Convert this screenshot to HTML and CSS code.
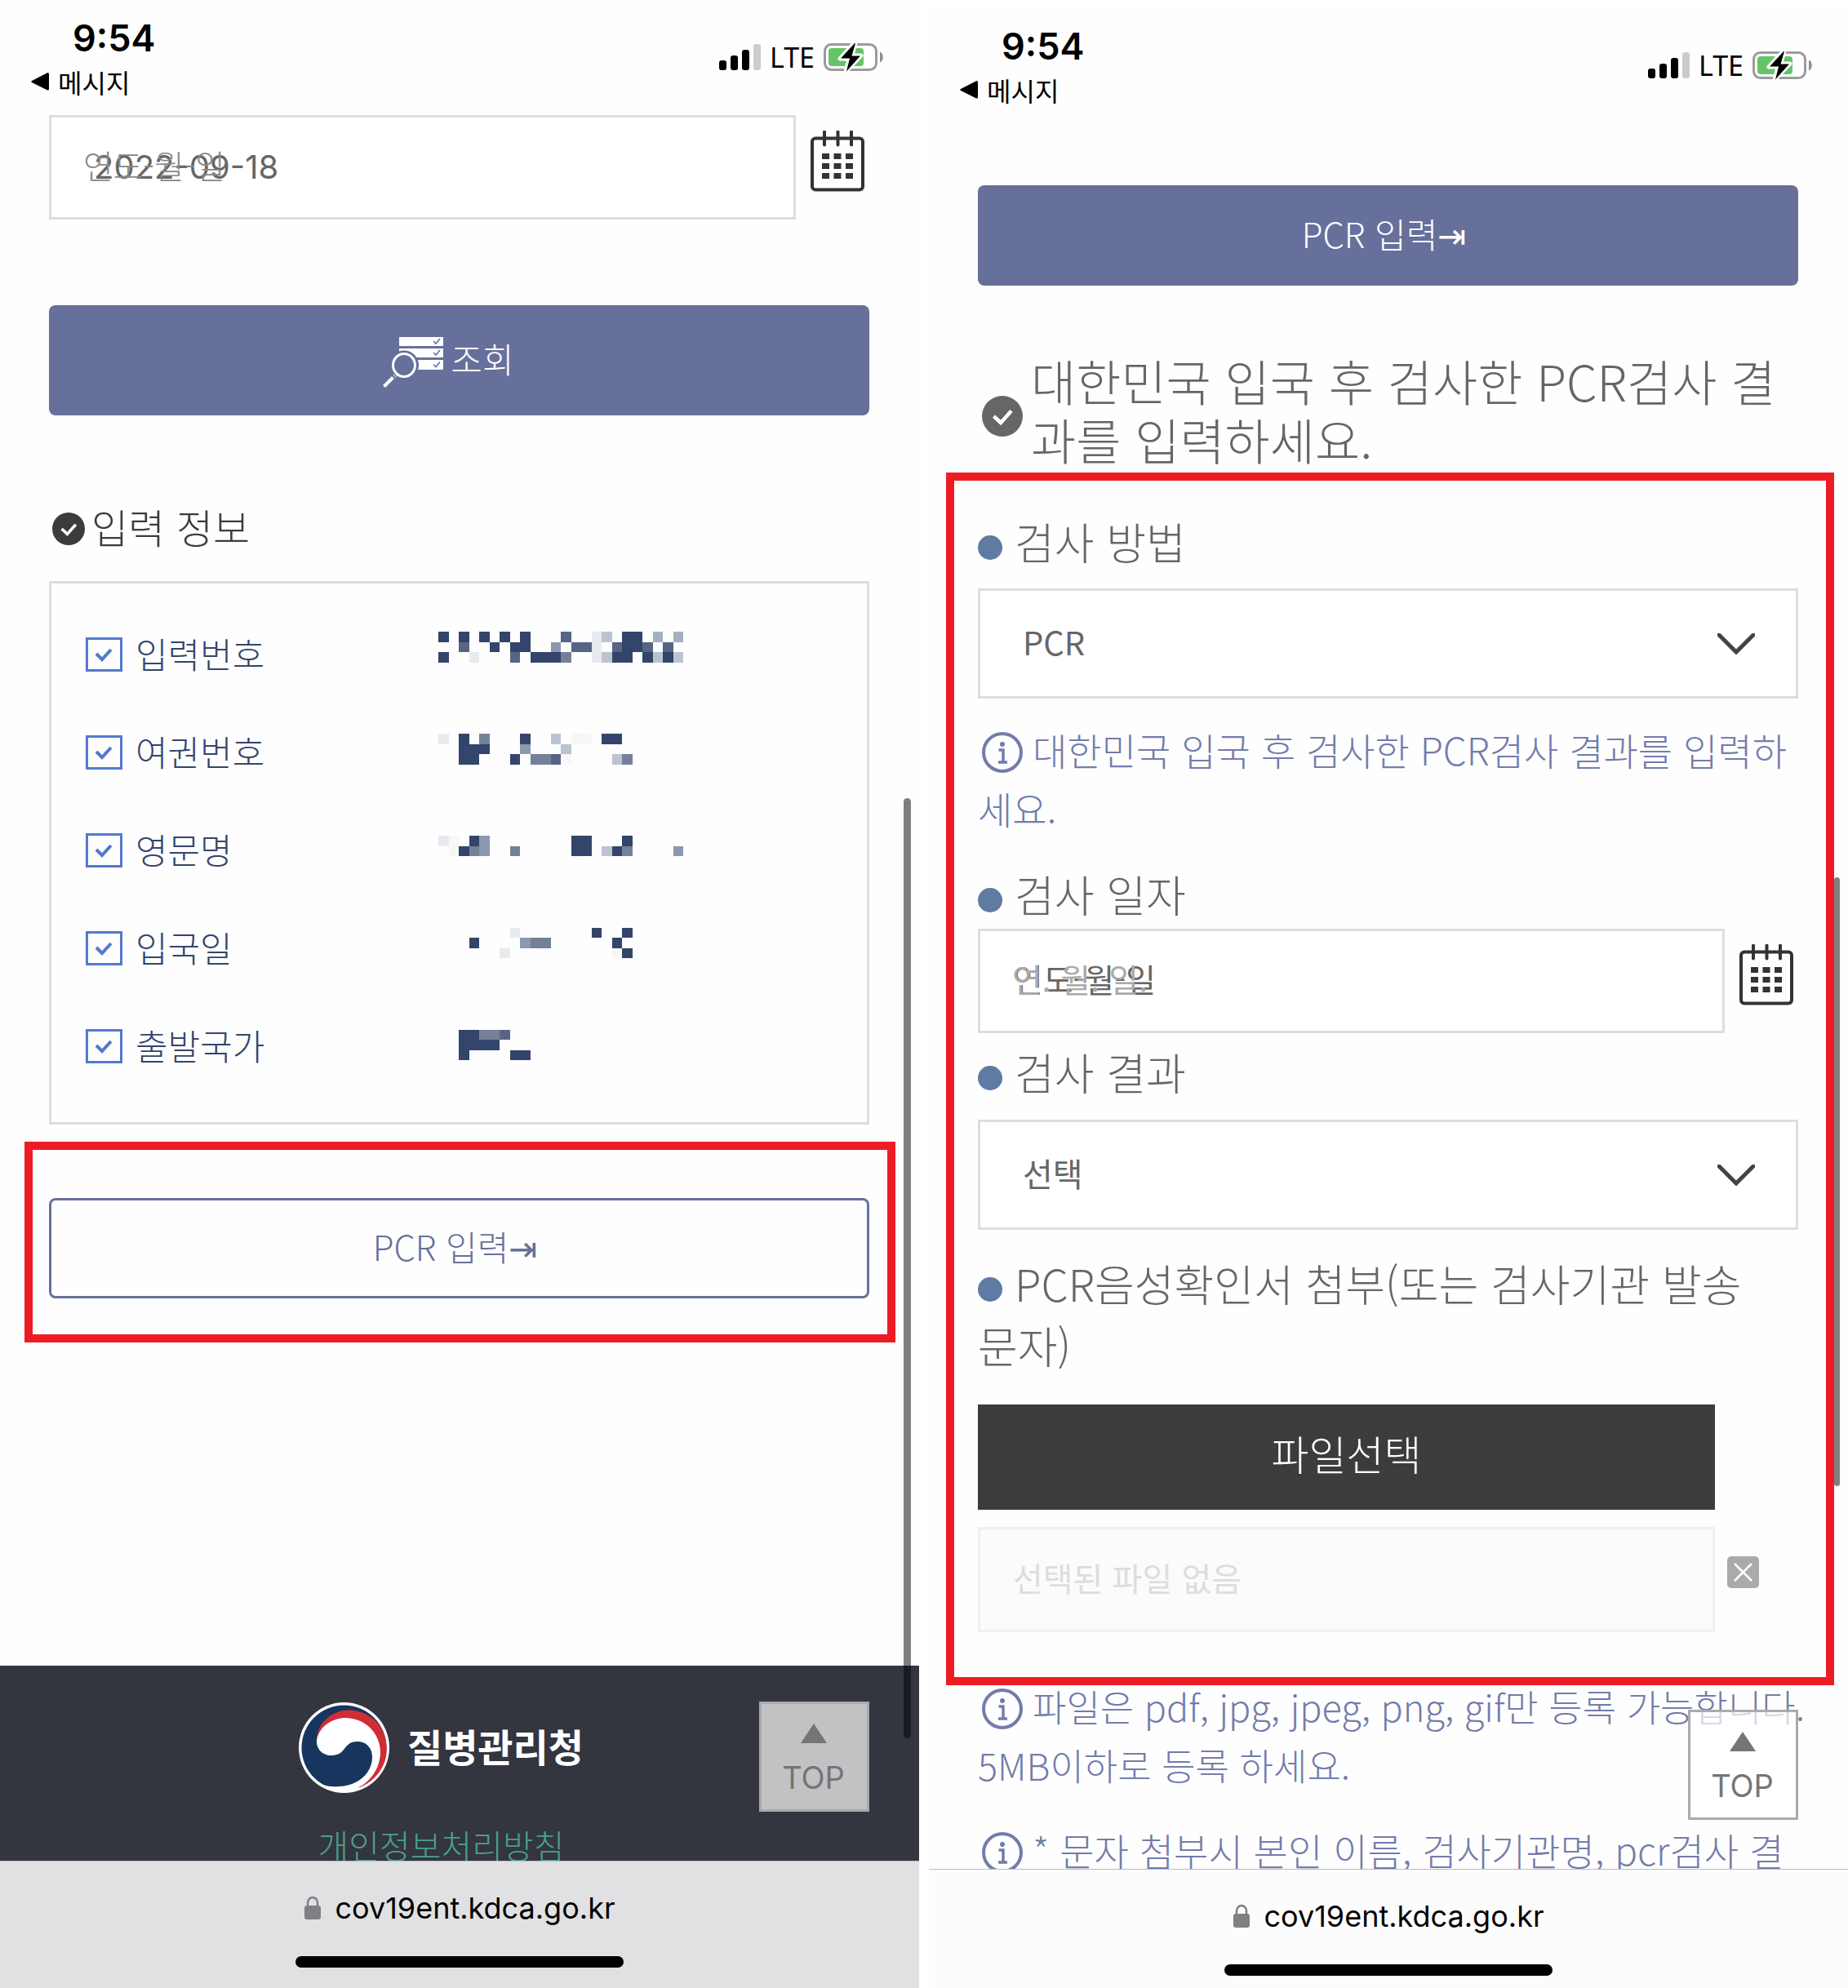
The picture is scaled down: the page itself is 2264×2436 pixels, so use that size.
FILE: index.html
```html
<!DOCTYPE html>
<html lang="ko">
<head>
<meta charset="utf-8">
<meta name="viewport" content="width=device-width, initial-scale=1">
<title>검역정보 사전입력 - PCR 입력</title>
<link rel="stylesheet" href="styles.css">
</head>
<body>
<svg class="sprite" aria-hidden="true">
  <symbol id="i-signal" viewBox="0 0 51 34">
    <g fill="#000"><rect x="0" y="21" width="9" height="12" rx="3"/><rect x="14" y="15" width="9" height="18" rx="3"/><rect x="28" y="8" width="9" height="25" rx="3"/></g>
    <rect x="42" y="1" width="9" height="32" rx="3" fill="#ccc"/>
  </symbol>
  <symbol id="i-battery" viewBox="0 0 74 38">
    <rect x="1.500" y="3.500" width="63" height="31" rx="8" fill="#fff" stroke="#9b9b9b" stroke-width="3"/>
    <rect x="6" y="8" width="43" height="22" rx="4" fill="#65c466"/>
    <path d="M69 12.500v13c5-2 5-11 0-13z" fill="#8e8e8e"/>
    <path d="M38 1 20 21h11l-4 16L46 17H35l4-16z" fill="#000" stroke="#fff" stroke-width="5" stroke-linejoin="round"/>
    <path d="M38 2 21 20.500h11l-4 16L45 17.500H34.500L39 2z" fill="#000"/>
  </symbol>
  <symbol id="i-calendar" viewBox="0 0 66 75">
    <rect x="2" y="9.500" width="62" height="63" rx="4" fill="none" stroke="#333" stroke-width="4"/>
    <path d="M17 1.500v16M33.500 1.500v16M50 1.500v16" stroke="#333" stroke-width="4" stroke-linecap="round"/>
    <path d="M14 28h9v7h-9zM28.500 28h9v7h-9zM43 28h9v7h-9zM14 40h9v7h-9zM28.500 40h9v7h-9zM43 40h9v7h-9zM14 52h9v7h-9zM28.500 52h9v7h-9zM43 52h9v7h-9z" fill="#333"/>
  </symbol>
  <symbol id="i-checked" viewBox="0 0 50 50">
    <circle cx="25" cy="25" r="25" fill="currentColor"/>
    <path d="M14.500 25l8.500 8L36 18.500" fill="none" stroke="#fff" stroke-width="4.500"/>
  </symbol>
  <symbol id="i-info" viewBox="0 0 50 50">
    <circle cx="25" cy="25" r="23" fill="none" stroke="#737cab" stroke-width="4"/>
    <circle cx="25" cy="15" r="3" fill="#737cab"/>
    <path d="M20.500 22H26v14M20 37h11" fill="none" stroke="#737cab" stroke-width="3.500"/>
  </symbol>
  <symbol id="i-lock" viewBox="0 0 20 30">
    <rect y="12" width="20" height="17" rx="3" fill="#7f7f84"/>
    <path d="M4 14V8.500a6 6.500 0 0 1 12 0V14" fill="none" stroke="#7f7f84" stroke-width="2.500"/>
  </symbol>
</svg>

<div class="pair">
  <section class="phone" aria-label="입력 정보 조회">
    <div class="screen">
      <header class="status">
        <div class="status-left">
          <time class="clock">9:54</time>
          <a class="back" href="#"><svg class="back-mark" viewBox="0 0 22 22"><path d="M20.500 0Q22 0 22 2v18q0 2-2 1.500L1 12q-1.500-1 0-2z"/></svg>메시지</a>
        </div>
        <div class="status-right">
          <svg class="signal"><use href="#i-signal"/></svg>
          <span>LTE</span>
          <svg class="battery"><use href="#i-battery"/></svg>
        </div>
      </header>

      <main class="content">
        <div class="date-row">
          <div class="date-field">
            <input class="box date-input date-input--filled" id="entry-date" type="text" value="2022-09-18" aria-label="입국일">
            <label class="ghost" for="entry-date">연도-월-일</label>
          </div>
          <button class="icon-btn" type="button" aria-label="달력"><svg class="calendar"><use href="#i-calendar"/></svg></button>
        </div>

        <button class="btn btn--search" type="button">
          <svg class="search-icon" viewBox="0 0 74 62">
            <path d="M20 0h54v11H20zM20 14h54v11H20zM20 28h54v12H20z" fill="#fff"/>
            <path d="M62 5l3 3 5-6M62 19l3 3 5-6M62 33.500l3 3 5-6" fill="none" stroke="#67709b" stroke-width="1.600"/>
            <circle cx="26" cy="34.500" r="18" fill="#67709b"/>
            <ellipse cx="26" cy="34.500" rx="13.500" ry="14" fill="none" stroke="#fff" stroke-width="3"/>
            <path d="M12.500 49.500 1.500 60.500" stroke="#fff" stroke-width="4"/>
            <path d="M13 46l3.500 4M15 45l3 3" stroke="#fff" stroke-width="1"/>
          </svg><span class="btn-text">조회</span>
        </button>

        <h2 class="info-title"><svg class="check-s"><use href="#i-checked"/></svg><span class="info-title-text">입력 정보</span></h2>

        <div class="info-box">
          <ul class="info-list">
            <li><label><input type="checkbox" class="tick" checked><span>입력번호</span></label></li>
            <li><label><input type="checkbox" class="tick" checked><span>여권번호</span></label></li>
            <li><label><input type="checkbox" class="tick" checked><span>영문명</span></label></li>
            <li><label><input type="checkbox" class="tick" checked><span>입국일</span></label></li>
            <li><label><input type="checkbox" class="tick" checked><span>출발국가</span></label></li>
          </ul>
          <svg class="masked" viewBox="0 0 24 42" preserveAspectRatio="none" shape-rendering="crispEdges" role="img" aria-label="가려진 개인정보">
            <path fill="#33456b" d="M0 0h1v1h-1zM2 0h1v1h-1zM4 0h1v1h-1zM6 0h1v1h-1zM8 0h1v1h-1zM18 0h2v2h-2zM5 1h1v1h-1zM7 1h2v1h-2zM0 2h1v1h-1zM9 2h3v1h-3zM17 2h2v1h-2zM20 2h1v1h-1zM22 2h1v1h-1z"/>
            <path fill="#566583" d="M12 0h1v1h-1zM2 1h1v1h-1zM13 1h2v1h-2zM17 1h1v1h-1zM20 1h1v1h-1zM22 1h1v1h-1zM7 2h1v1h-1zM11 12h1v1h-1zM6 39h1v1h-1z"/>
            <path fill="#e9eaf0" d="M15 0h1v3h-1zM3 2h1v1h-1zM0 10h1v1h-1zM0 20h1v1h-1zM7 29h1v1h-1zM6 31h1v1h-1z"/>
            <path fill="#bcc3d0" d="M16 0h1v1h-1zM16 2h1v1h-1zM21 2h1v1h-1zM23 2h1v1h-1zM11 10h1v1h-1zM12 11h1v1h-1zM17 12h1v1h-1zM16 21h1v1h-1z"/>
            <path fill="#a4afc0" d="M21 0h1v1h-1zM23 0h1v1h-1z"/>
            <path fill="#8c98ad" d="M11 1h1v1h-1zM8 11h1v1h-1zM4 20h1v2h-1zM23 21h1v1h-1zM8 30h1v1h-1z"/>
            <path fill="#748199" d="M12 2h1v1h-1zM4 10h1v1h-1zM9 12h2v1h-2zM18 12h1v1h-1zM3 21h1v1h-1zM7 21h1v1h-1zM18 21h1v1h-1zM9 30h2v1h-2zM4 39h2v1h-2z"/>
            <path fill="#33456b" d="M2 10h1v1h2v1h-1v1h-2zM8 10h1v1h-1zM16 10h2v1h-2zM7 12h1v1h-1zM3 20h1v1h-1zM2 21h1v1h-1zM13 20h2v2h-2zM18 20h1v1h-1zM17 21h1v1h-1zM15 29h1v1h-1zM18 29h1v1h-1zM3 30h1v1h-1zM17 30h1v1h-1zM18 31h1v1h-1zM2 39h2v1h2v1h-3v1h-1zM7 41h2v1h-2z"/>
            <path fill="#f7f7f8" d="M13 10h2v1h-2zM12 12h1v1h-1zM1 20h1v2h-1zM17 31h1v1h-1z"/>
          </svg>
        </div>

        <div class="mark mark--button">
          <button class="btn btn--pcr btn--outline" type="button"><span class="btn-text">PCR 입력⇥</span></button>
        </div>
      </main>

      <footer class="footer">
        <div class="brand">
          <svg class="emblem" viewBox="0 0 111 111">
            <circle cx="55.500" cy="55.500" r="55.500" fill="#fff"/>
            <circle cx="55.500" cy="55.500" r="52" fill="#17365f"/>
            <path fill="#d12d34" d="M22 46C23 22 44 9 62 9.500C80 10 95 20 102 33C116 62 104 92 73 105C92 92 100 76 98 61L58 22z"/>
            <path fill="#fff" d="M22 46C26 28 42 19 58 19C84 20 100 40 100 61C100 78 90 96 73 104.500L70 109C58 110 40 108 30 101C36 103 42 103.500 49 103C74 102 90 86 90 67C90 55 82 48 72 48C62 48 59 53 55 58C51 63 46 65 40 65C29 65 21 57 22 46Z"/>
          </svg>
          <strong>질병관리청</strong>
        </div>
        <a class="policy" href="#">개인정보처리방침</a>
      </footer>

      <a class="top-btn" href="#"><svg class="top-mark" viewBox="0 0 32 24"><path d="M16 0l16 24H0z" fill="#757575"/></svg>TOP</a>
      <div class="scroll scroll--entry"></div>
    </div>
    <div class="browser browser--grey">
      <div class="address"><svg class="lock"><use href="#i-lock"/></svg>cov19ent.kdca.go.kr</div>
      <div class="home"></div>
    </div>
  </section>

  <section class="phone phone--shifted" aria-label="PCR 검사 결과 입력">
    <div class="screen">
      <header class="status">
        <div class="status-left">
          <time class="clock">9:54</time>
          <a class="back" href="#"><svg class="back-mark" viewBox="0 0 22 22"><path d="M20.500 0Q22 0 22 2v18q0 2-2 1.500L1 12q-1.500-1 0-2z"/></svg>메시지</a>
        </div>
        <div class="status-right">
          <svg class="signal"><use href="#i-signal"/></svg>
          <span>LTE</span>
          <svg class="battery"><use href="#i-battery"/></svg>
        </div>
      </header>

      <main class="content content--form">
        <button class="btn btn--pcr" type="button"><span class="btn-text">PCR 입력⇥</span></button>

        <h2 class="form-title"><svg class="check-l"><use href="#i-checked"/></svg><span class="form-title-text">대한민국 입국 후 검사한 PCR검사 결과를 입력하세요.</span></h2>

        <form class="mark mark--form">
          <label class="field-label" for="method">검사 방법</label>
          <select class="box select" id="method"><option>PCR</option></select>
          <p class="note"><svg class="note-icon"><use href="#i-info"/></svg>대한민국 입국 후 검사한 PCR검사 결과를 입력하세요.</p>

          <label class="field-label field-label--date" for="test-date">검사 일자</label>
          <div class="date-row">
            <div class="date-field">
              <input class="box date-input" id="test-date" type="text" placeholder="연도-월-일">
              <span class="ghost ghost--light">연. 월. 일.</span>
            </div>
            <button class="icon-btn" type="button" aria-label="달력"><svg class="calendar"><use href="#i-calendar"/></svg></button>
          </div>

          <label class="field-label field-label--result" for="result">검사 결과</label>
          <select class="box select" id="result"><option>선택</option></select>

          <label class="field-label field-label--file" for="file-name">PCR음성확인서 첨부(또는 검사기관 발송문자)</label>
          <button class="file-btn" type="button">파일선택</button>
          <div class="file-row">
            <input class="box file-name" id="file-name" type="text" placeholder="선택된 파일 없음" disabled>
            <button class="icon-btn icon-btn--clear" type="button" aria-label="파일 삭제"><svg class="clear" viewBox="0 0 39 39"><rect width="39" height="39" rx="5" fill="#aaa"/><path d="M9 9l21 21M30 9 9 30" stroke="#fff" stroke-width="2.500"/></svg></button>
          </div>
        </form>

        <p class="note note--file"><svg class="note-icon"><use href="#i-info"/></svg>파일은 pdf, jpg, jpeg, png, gif만 등록 가능합니다.<br>5MB이하로 등록 하세요.</p>
        <p class="note note--last"><svg class="note-icon"><use href="#i-info"/></svg>* 문자 첨부시 본인 이름, 검사기관명, pcr검사 결과</p>
      </main>

      <a class="top-btn" href="#"><svg class="top-mark" viewBox="0 0 32 24"><path d="M16 0l16 24H0z" fill="#757575"/></svg>TOP</a>
      <div class="scroll scroll--form"></div>
    </div>
    <div class="browser">
      <div class="address"><svg class="lock"><use href="#i-lock"/></svg>cov19ent.kdca.go.kr</div>
      <div class="home"></div>
    </div>
  </section>
</div>
</body>
</html>
```

FILE: styles.css
```css
* { box-sizing: border-box; }

body {
  margin: 0;
  background: #fff;
  color: #666;
  font-family: "Noto Sans CJK KR", "DejaVu Sans", sans-serif;
  font-weight: 300;
}

h2, p, ul { margin: 0; padding: 0; font-weight: 300; }
ul { list-style: none; }
a { color: inherit; text-decoration: none; }
svg { display: block; flex: none; }
button, input, select { font: inherit; color: inherit; margin: 0; }
button { border: 0; padding: 0; background: none; }
.sprite { position: absolute; width: 0; height: 0; }

/* two phones side by side */
.pair {
  display: grid;
  grid-template-columns: 1fr 1fr;
  gap: 12px;
  height: 100vh;
  overflow: hidden;
}
.phone {
  display: flex;
  flex-direction: column;
  height: 100vh;
  min-width: 0;
  background: #fefefe;
}
.phone--shifted { margin-top: 10px; }
.screen {
  position: relative;
  display: flex;
  flex: 1;
  flex-direction: column;
  min-height: 0;
  overflow: hidden;
}

/* status bar */
.status {
  display: flex;
  justify-content: space-between;
  flex: none;
  height: 141px;
  padding: 19px 43px 0 38px;
  color: #000;
}
.clock {
  display: block;
  padding-left: 51px;
  font: 600 45px/56px Inter, sans-serif;
}
.back {
  display: flex;
  align-items: center;
  gap: 11px;
  font-size: 32px;
  font-weight: 400;
  line-height: 50px;
}
.back-mark { width: 22px; height: 22px; }
.status-right {
  display: flex;
  align-items: center;
  gap: 11px;
  height: 101px;
  font: 400 34px/40px "Noto Sans", sans-serif;
}
.signal { width: 51px; height: 34px; }
.battery { width: 74px; height: 38px; }

/* page body */
.content { flex: 1; min-height: 0; padding: 0 61px 0 60px; }
.content--form { padding-top: 76px; }
.box {
  display: block;
  width: 100%;
  border: 3px solid #ddd;
  border-radius: 0;
  background-color: #fff;
  font-size: 40px;
  font-weight: 400;
  outline: 0;
}
.date-row { display: flex; gap: 18px; padding-right: 6px; }
.date-field { position: relative; flex: 1; }
.date-input { height: 128px; padding: 0 40px 6px; }
.date-input--filled { padding: 0 40px 2px 52px; font-family: Inter, sans-serif; }
.date-input::placeholder { color: #666; opacity: 1; }
.ghost {
  position: absolute;
  left: 42px;
  top: 0;
  color: #888;
  font-size: 40px;
  font-weight: 300;
  line-height: 122px;
}
.ghost--light { color: #aaa; font-weight: 400; }
.icon-btn { flex: none; align-self: flex-start; padding-top: 19px; }
.calendar { width: 66px; height: 75px; }

.btn {
  display: flex;
  align-items: center;
  justify-content: center;
  width: 100%;
  height: 123px;
  border-radius: 8px;
  background: #67709b;
  color: #fff;
  font-size: 42px;
}
.btn-text { padding-bottom: 6px; }
.btn--search { gap: 9px; height: 135px; margin-top: 105px; padding-right: 26px; }
.btn--search .search-icon { margin-top: 4px; }
.btn--pcr { padding-right: 10px; }
.btn--outline { border: 3px solid #67709b; background: #fefefe; color: #67709b; }
.search-icon { width: 74px; height: 62px; }

.info-title {
  display: flex;
  align-items: center;
  gap: 8px;
  margin-top: 103px;
  padding-left: 4px;
  color: #3c3c3c;
  font-size: 49px;
  line-height: 72px;
}
.info-title-text { line-height: 66px; padding-bottom: 6px; }
.check-s { width: 40px; height: 40px; }
.info-box {
  display: grid;
  grid-template-columns: 432px 1fr;
  margin-top: 28px;
  padding: 27px 42px 33px;
  border: 3px solid #ddd;
  color: #33456b;
  font-size: 43px;
}
.info-list label { display: flex; align-items: center; gap: 16px; height: 120px; }
.info-list span { padding-bottom: 4px; }
.tick {
  appearance: none;
  flex: none;
  width: 45px;
  height: 42px;
  border: 3px solid #5378cf;
  background: url("data:image/svg+xml,%3Csvg xmlns='http://www.w3.org/2000/svg' viewBox='0 0 39 36'%3E%3Cpath d='M10 17l7 7 11-12' fill='none' stroke='%235378cf' stroke-width='4'/%3E%3C/svg%3E") center / contain no-repeat;
}
.masked { width: 300px; height: 525px; margin-top: 32px; }

/* red highlight frames */
.mark { border: 10px solid #ed1c24; }
.mark--button { margin: 21px -32px 0 -30px; padding: 59px 22px 44px 20px; }
.mark--form { margin: 0 -44px 0 -39px; padding: 36px 34px 55px 29px; }

/* form */
.form-title {
  display: flex;
  align-items: center;
  gap: 10px;
  margin-top: 84px;
  padding-left: 5px;
  font-size: 60px;
  line-height: 72px;
}
.form-title-text { margin: -4px -10px 5px 0; }
.check-l { width: 50px; height: 50px; margin-top: 6px; }
.field-label {
  display: block;
  margin-bottom: 20px;
  font-size: 53px;
  line-height: 76px;
}
.field-label::before {
  content: "";
  display: inline-block;
  width: 30px;
  height: 30px;
  margin-right: 15px;
  border-radius: 50%;
  background: #5f7aa3;
}
.field-label--date { margin: 31px 0 5px; }
.field-label--result { margin: 9px 0 21px; }
.field-label--file { margin: 27px 0 35px; padding-right: 40px; }
.select {
  appearance: none;
  height: 135px;
  padding: 0 52px 6px;
  background: #fff url("data:image/svg+xml,%3Csvg xmlns='http://www.w3.org/2000/svg' viewBox='0 0 46 26'%3E%3Cpath d='M2 2l21 21L44 2' fill='none' stroke='%23444' stroke-width='5' stroke-linecap='round'/%3E%3C/svg%3E") right 50px center / 46px 26px no-repeat;
}
.note { margin-top: 26px; color: #737cab; font-size: 46px; line-height: 72px; }
.note-icon {
  display: inline-block;
  width: 50px;
  height: 50px;
  margin: 0 12px 0 5px;
  vertical-align: -9px;
}
.note--file { margin-top: -10px; font-size: 45px; white-space: nowrap; }
.note--last { margin-top: 31px; }
.file-btn {
  display: block;
  width: calc(100% - 102px);
  height: 129px;
  padding-bottom: 12px;
  background: #3c3c3c;
  color: #fff;
  font-size: 50px;
}
.file-row { display: flex; gap: 15px; margin-top: 21px; padding-right: 48px; }
.file-name {
  flex: 1;
  height: 129px;
  padding: 0 40px 6px;
  border-color: #f0f0f0;
  background: #fbfbfb;
}
.file-name::placeholder { color: #ddd; opacity: 1; }
.icon-btn--clear { padding-top: 36px; }
.clear { width: 39px; height: 39px; }

/* footer */
.footer {
  display: flex;
  flex: none;
  flex-direction: column;
  align-items: center;
  height: 239px;
  padding: 45px 45px 0 0;
  overflow: hidden;
  background: #33353f;
}
.brand { display: flex; align-items: center; gap: 22px; color: #fff; font-size: 47px; }
.emblem { width: 111px; height: 111px; }
.brand strong { padding-bottom: 6px; font-weight: 700; line-height: 64px; }
.policy { margin-top: 33px; color: #4b9f8b; font-size: 41px; line-height: 60px; }

/* overlays */
.top-btn {
  position: absolute;
  right: 61px;
  bottom: 60px;
  display: flex;
  flex-direction: column;
  align-items: center;
  gap: 18px;
  width: 135px;
  height: 135px;
  padding: 24px 2px 0 0;
  border: 3px solid #aaa;
  background: rgba(255, 255, 255, .7);
  color: #757575;
  font: 400 38px/48px Inter, sans-serif;
}
.top-mark { width: 32px; height: 24px; }
.scroll {
  position: absolute;
  border-radius: 5px;
  background: rgba(0, 0, 0, .5);
}
.scroll--entry { right: 10px; bottom: 150px; width: 9px; height: 1152px; }
.scroll--form { right: 10px; bottom: 469px; width: 7px; height: 746px; }

/* browser bar */
.browser {
  display: flex;
  flex: none;
  flex-direction: column;
  align-items: center;
  justify-content: space-between;
  height: 156px;
  padding: 33px 0 25px;
  border-top: 1px solid #bbb;
  background: #fcfcfc;
}
.browser--grey { background: #e1e1e3; }
.address {
  display: flex;
  align-items: center;
  gap: 18px;
  color: #000;
  font: 400 36px/48px Inter, sans-serif;
}
.lock { width: 20px; height: 30px; }
.home { width: 402px; height: 14px; border-radius: 7px; background: #000; }
```
